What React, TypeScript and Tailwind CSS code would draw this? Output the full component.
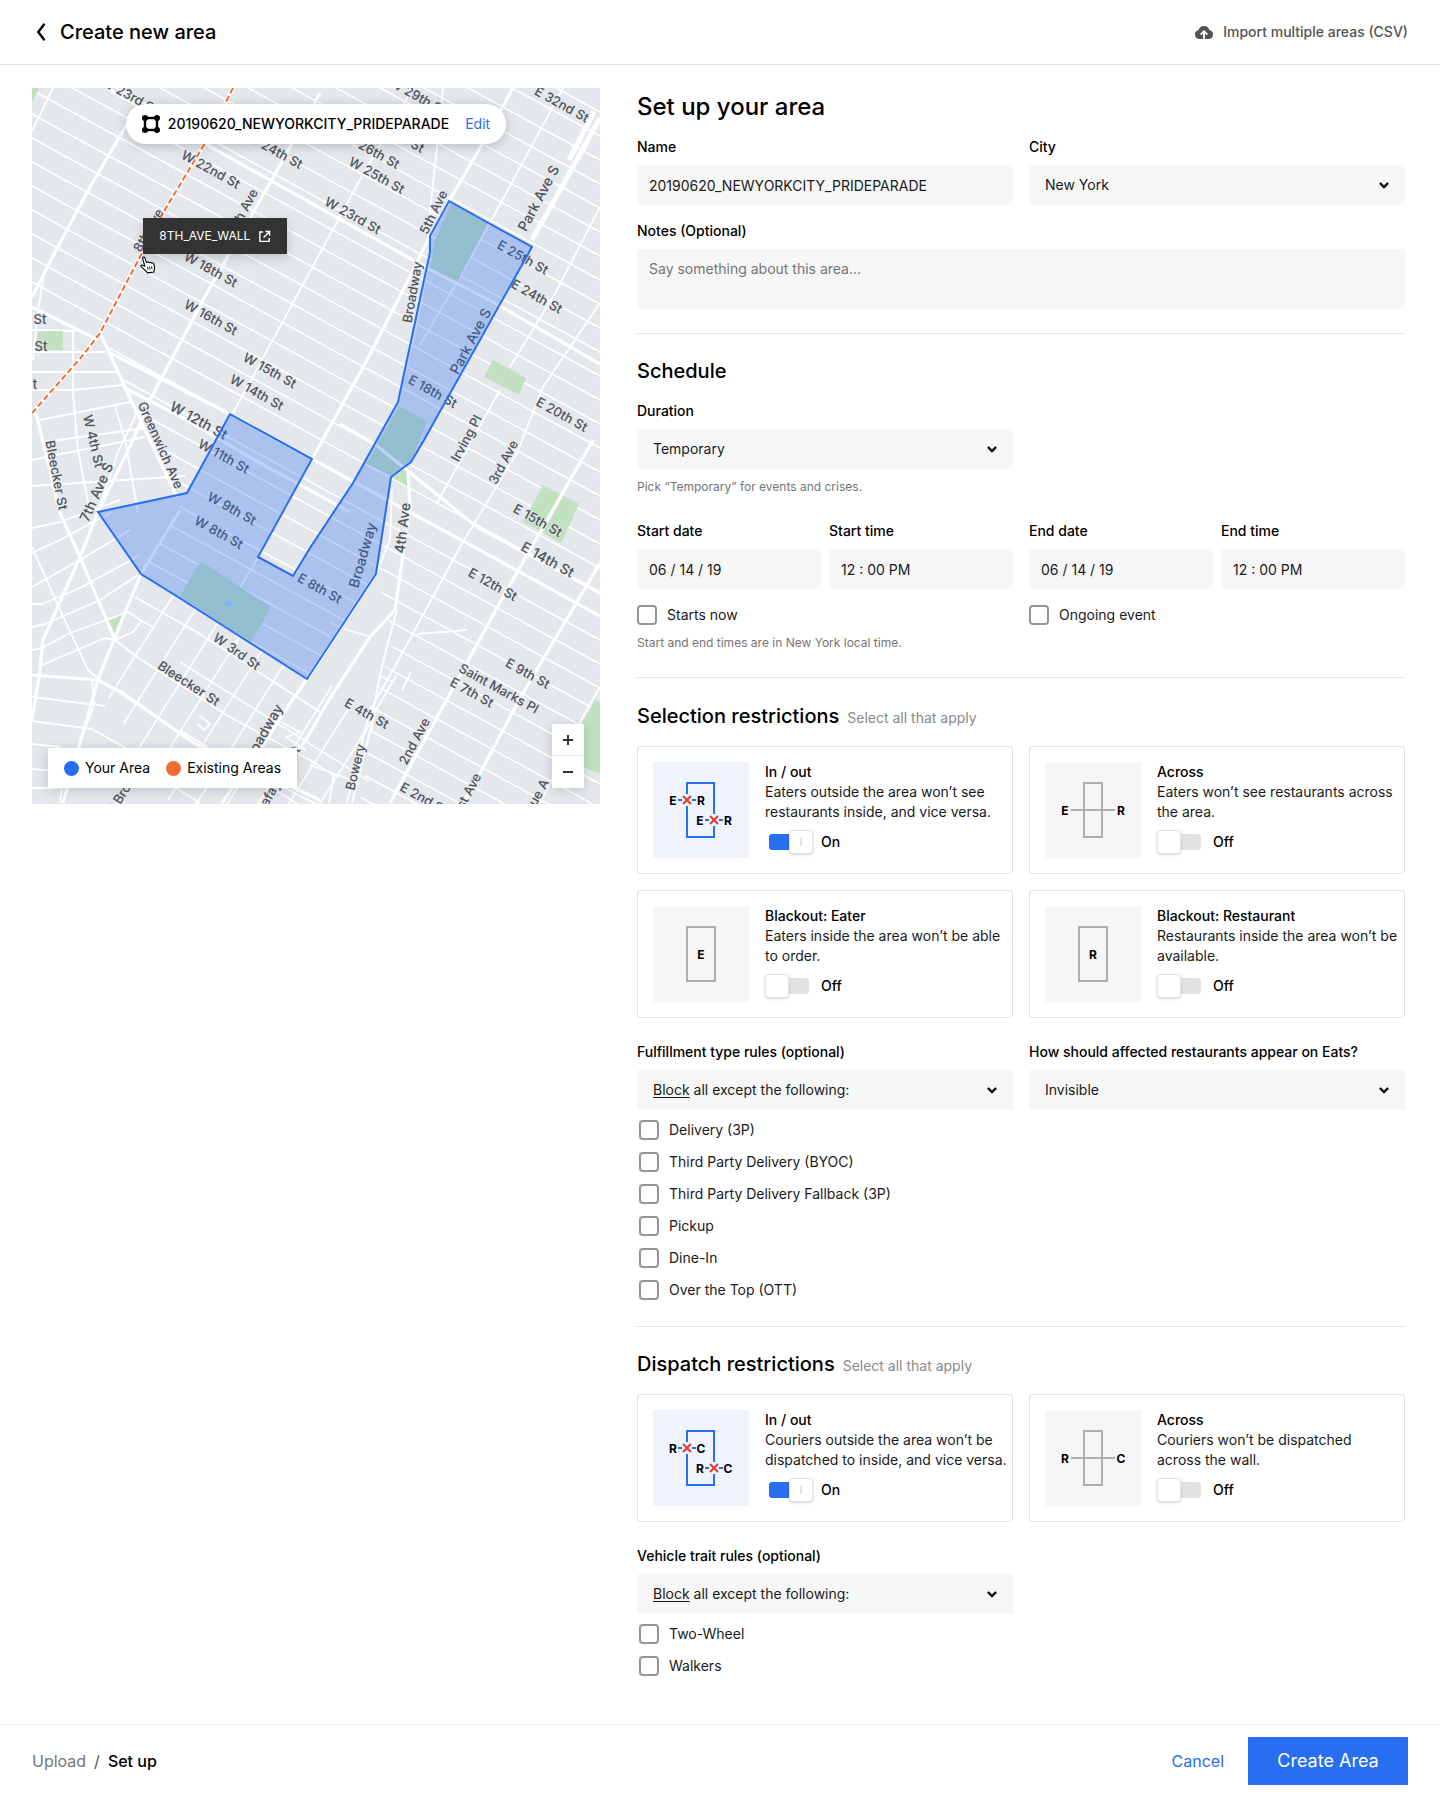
import React, { useId, useState } from "react";

/* ------------------------------------------------------------------ map */

type Pt = [number, number];

const path = (pts: Pt[]) => "M" + pts.map((p) => p.join(" ")).join("L");

const AREA: Pt[] = [
  [449, 201], [532, 247], [424, 440], [411, 462], [391, 477], [376, 574], [307, 679],
  [178, 597], [141, 574], [98, 512], [187, 493], [230, 414], [312, 459], [258, 557],
  [293, 576], [310, 548], [353, 483], [398, 402], [430, 252], [430, 236],
];

const WALL: Pt[] = [[233, 88], [205, 143], [163, 213], [100, 333], [84, 354], [32, 413]];

const PARKS: Pt[][] = [
  [[452, 203], [488, 223], [457, 282], [430, 269], [435, 240]],
  [[399, 406], [427, 421], [411, 461], [390, 475], [367, 464]],
  [[392, 477], [407, 468], [408, 487]],
  [[201, 561], [271, 607], [251, 642], [180, 596]],
  [[493, 360], [526, 378], [519, 395], [484, 377]],
  [[543, 485], [560, 494], [542, 532], [523, 522]],
  [[563, 496], [579, 504], [561, 543], [543, 533]],
  [[595, 700], [600, 702], [600, 774], [583, 767], [582, 723]],
  [[38, 331], [63, 331], [63, 350], [36, 350]],
  [[32, 88], [39, 88], [32, 102]],
  [[108, 621], [122, 615], [115, 633]],
];

/* Wide avenues and crosstown streets */
const MAJOR: Pt[][] = [
  [[143, 97], [90, 187], [52, 258], [32, 297]],
  [[320, 93], [270, 183], [203, 300], [150, 400], [133, 440], [98, 512], [80, 557], [43, 640], [40, 670], [32, 720]],
  [[180, 510], [141, 574], [115, 637], [98, 680], [63, 803]],
  [[513, 88], [483, 143], [449, 201], [428, 240], [398, 300], [367, 360], [317, 450]],
  [[395, 610], [370, 637], [330, 698], [310, 733], [266, 803]],
  [[376, 574], [307, 679], [260, 747], [222, 803]],
  [[408, 470], [410, 507], [395, 610]],
  [[593, 440], [503, 597], [430, 730], [390, 803]],
  [[600, 563], [523, 693], [464, 803]],
  [[100, 333], [137, 413], [177, 497]],
  [[32, 410], [37, 417], [45, 450], [60, 513], [80, 557], [115, 640]],
  [[110, 90], [207, 145], [320, 208], [427, 268], [493, 302], [600, 364]],
  [[110, 353], [230, 414], [312, 459], [378, 495], [476, 548], [600, 616]],
  [[340, 424], [376, 445], [477, 527], [600, 593]],
  [[123, 387], [187, 420], [258, 462], [350, 512]],
  [[32, 675], [98, 680], [120, 692], [200, 747], [260, 772], [320, 800]],
  [[32, 307], [94, 338]],
];

/* The paired roadway of Park Ave S */
const PARK_AVE: Pt[][] = [[[600, 118], [570, 172], [532, 240]], [[594, 112], [569, 160]]];

const MINOR: Pt[][] = [
  [[53, 88], [32, 131]],
  [[410, 93], [356, 187], [300, 290], [233, 413]],
  [[443, 88], [430, 213], [428, 240]],
  [[430, 252], [418, 320], [398, 402]],
  [[563, 88], [490, 223], [457, 282], [420, 345]],
  [[600, 207], [557, 290], [510, 367]],
  [[500, 390], [437, 503]],
  [[600, 303], [543, 387], [517, 453], [460, 547], [393, 670], [370, 710], [347, 803]],
  [[396, 676], [375, 712], [352, 803]],
  [[397, 610], [386, 650], [379, 680], [373, 712], [372, 730]],
  [[600, 687], [583, 717], [540, 803]],
  [[45, 270], [38, 310], [33, 360]],
  [[392, 490], [390, 540], [376, 574]],
  [[137, 413], [118, 452], [98, 512]],
  [[317, 450], [258, 557], [230, 605]],
  [[370, 637], [342, 628], [330, 622]],
  [[417, 634], [467, 630]],
  [[120, 690], [190, 740], [320, 806]],
  [[73, 330], [73, 393], [78, 450], [90, 512]],
  [[32, 330], [75, 331]],
  [[32, 352], [105, 352]],
  [[32, 372], [116, 372]],
  [[32, 390], [74, 390], [123, 385]],
  [[40, 420], [130, 402]],
  [[45, 442], [146, 428]],
  [[32, 460], [145, 437]],
  [[32, 486], [185, 476]],
  [[115, 406], [125, 440], [138, 512]],
  [[32, 528], [60, 522], [120, 500]],
  [[32, 553], [60, 540], [112, 512]],
  [[32, 587], [80, 560], [130, 530]],
  [[32, 604], [42, 604], [80, 588], [140, 555]],
  [[32, 627], [45, 624], [100, 600], [138, 575]],
  [[32, 650], [42, 648], [68, 634], [128, 612], [140, 620], [155, 628]],
  [[42, 665], [105, 638], [115, 640], [133, 632], [142, 620]],
  [[32, 547], [60, 610], [88, 670], [98, 678]],
  [[32, 697], [105, 706]],
  [[32, 721], [92, 729], [150, 762]],
  [[32, 744], [60, 747]],
  [[32, 769], [160, 778], [200, 803]],
  [[92, 680], [94, 706], [78, 747]],
  [[115, 640], [137, 657], [230, 717], [310, 760], [335, 776]],
  [[135, 597], [200, 634], [320, 712]],
  [[281, 722], [300, 732], [286, 737], [306, 750]],
  [[60, 803], [62, 788], [32, 788]],
  [[200, 716], [210, 724], [204, 730], [198, 724]],
  [[402, 690], [411, 672]],
  [[380, 676], [393, 682]],
  [[310, 765], [352, 780]],
  [[329, 803], [334, 775]],
];

const range = (n: number) => Array.from({ length: n }, (_, i) => i);

const LABELS: [string, number, number, number, number?][] = [
  ["W 23rd St", 130, 95, 29], ["W 22nd St", 211, 169, 29], ["W 24th St", 275, 150, 29],
  ["7th Ave", 243, 210, -62], ["8th Ave", 148, 230, -60], ["W 18th St", 211, 269, 29],
  ["W 16th St", 211, 317, 29], ["W 15th St", 270, 370, 29], ["W 14th St", 257, 392, 29],
  ["W 12th St", 199, 420, 29, 14], ["W 11th St", 224, 456, 29], ["W 9th St", 232, 508, 29],
  ["W 8th St", 219, 532, 29], ["E 8th St", 320, 588, 29], ["St", 40, 319, 0], ["St", 41, 346, 0],
  ["t", 35, 384, 0], ["Greenwich Ave", 161, 445, 66], ["W 4th St", 94, 441, 77],
  ["7th Ave S", 96, 492, -66, 14], ["Bleecker St", 57, 475, 79], ["W 3rd St", 237, 651, 35],
  ["Bleecker St", 189, 683, 33], ["Broadway", 262, 734, -60, 14], ["Lafayette St", 278, 779, -60],
  ["W Broadway", 128, 783, -58], ["W 25th St", 377, 175, 29], ["W 26th St", 372, 150, 29],
  ["W 27th St", 397, 134, 29], ["W 29th St", 418, 96, 29], ["W 23rd St", 353, 215, 29],
  ["5th Ave", 433, 212, -64], ["Broadway", 412, 292, -80], ["Park Ave S", 538, 198, -62, 14],
  ["E 32nd St", 562, 104, 29], ["E 25th St", 523, 257, 29], ["E 24th St", 537, 296, 29],
  ["Park Ave S", 470, 341, -62, 14], ["E 18th St", 433, 391, 29], ["E 20th St", 562, 414, 29],
  ["Irving Pl", 466, 438, -62], ["3rd Ave", 503, 462, -62], ["4th Ave", 402, 528, -83, 14],
  ["Broadway", 362, 555, -74, 14], ["E 15th St", 538, 520, 29], ["E 14th St", 548, 559, 29, 14],
  ["E 12th St", 493, 584, 29], ["E 9th St", 528, 673, 29], ["Saint Marks Pl", 499, 688, 29],
  ["E 7th St", 472, 692, 29], ["E 4th St", 367, 713, 29], ["2nd Ave", 414, 741, -62],
  ["Bowery", 355, 767, -76], ["E 2nd St", 424, 798, 29], ["1st Ave", 467, 793, -62],
  ["Avenue A", 531, 806, -62],
];

function StreetMap() {
  return (
    <svg viewBox="32 88 568 716" preserveAspectRatio="xMidYMid slice" className="block h-full w-full" role="img" aria-label="Map of the area">
      <defs>
        <clipPath id="uptown">
          <path d="M32 88H600V804H360L376 700L393 640L376 574L307 679L141 574L187 493L150 440L100 333L32 300Z" />
        </clipPath>
        <clipPath id="soho">
          <path d="M141 574L307 679L376 574L393 640L365 804H170L98 680L115 637Z" />
        </clipPath>
      </defs>
      <rect x="32" y="88" width="568" height="716" fill="#e4e7ec" />
      <g fill="none" stroke="#fff" strokeLinejoin="round">
        <g clipPath="url(#uptown)" strokeWidth="1.6">
          {range(45).map((i) => (
            <path key={i} d={`M32 ${-198 + i * 24}L600 ${112 + i * 24}`} />
          ))}
        </g>
        <g clipPath="url(#soho)" strokeWidth="1.6">
          {range(10).map((i) => (
            <path key={i} d={`M${178 + i * 22} ${588 + i * 14}L${80 + i * 22} ${744 + i * 14}`} />
          ))}
          {range(2).map((i) => (
            <path key={i} d={`M180 ${662 + i * 68}L380 ${788 + i * 68}`} />
          ))}
        </g>
        {MINOR.map((p, i) => (
          <path key={i} d={path(p)} strokeWidth="1.8" />
        ))}
      </g>
      {PARKS.map((p, i) => (
        <path key={i} d={path(p) + "Z"} fill="#c1e1c1" />
      ))}
      <g fill="none" stroke="#fff" strokeLinejoin="round">
        {MAJOR.map((p, i) => (
          <path key={i} d={path(p)} strokeWidth="3.2" />
        ))}
        {PARK_AVE.map((p, i) => (
          <path key={i} d={path(p)} strokeWidth="5" />
        ))}
        <path d={path(WALL)} strokeWidth="4" />
      </g>
      <g className="font-medium" fill="#4e5259" textAnchor="middle" dominantBaseline="central" stroke="#e4e7ec" strokeWidth="2" strokeOpacity="0.6" paintOrder="stroke">
        {LABELS.map(([text, x, y, angle, size], i) => (
          <text key={i} fontSize={size ?? 13} transform={`translate(${x} ${y}) rotate(${angle})`}>
            {text}
          </text>
        ))}
      </g>
      <path d={path(WALL)} fill="none" stroke="#ed6e33" strokeWidth="2" strokeDasharray="6 3" />
      <path d={path(AREA) + "Z"} fill="#276ef1" fillOpacity="0.3" stroke="#276ef1" strokeWidth="2" />
      <circle cx="228" cy="603" r="3" fill="#84b0f4" />
    </svg>
  );
}

function VertexIcon() {
  return (
    <svg width="18" height="18" viewBox="0 0 18 18" aria-hidden="true">
      <rect x="3" y="3" width="12" height="12" fill="none" stroke="#000" strokeWidth="2.4" />
      {[[3, 3], [15, 3], [3, 15], [15, 15]].map(([x, y]) => (
        <circle key={`${x}-${y}`} cx={x} cy={y} r="3" />
      ))}
    </svg>
  );
}

function HandCursor() {
  return (
    <svg className="absolute left-[19%] top-[23.5%]" width="16" height="18" viewBox="0 0 16 18" aria-hidden="true">
      <path
        d="M2.600 2.400C2.300 1 4.300 0.500 4.900 1.900L6.600 6.600C7.100 5.700 8.700 5.700 9 6.700C9.700 5.900 11.100 6.100 11.400 7.100C12.200 6.500 13.500 6.900 13.800 8L14.600 11.200C14.800 12.800 14.100 13.600 14 14.600V16L7.300 16.900L6.600 15.600C5.300 14.700 4.200 13.200 2.600 11.900L1.200 10.900C0.300 10 1.200 8.800 2.600 9.200L4.900 10.300Z"
        fill="#fff"
        stroke="#000"
        strokeWidth="1.100"
        strokeLinejoin="round"
      />
      <path d="M7.500 10.800L8.100 13.800M9.600 10.500L10.100 13.500M11.600 10.300L12 13.100" stroke="#000" strokeWidth="0.900" fill="none" />
    </svg>
  );
}

function MapPanel() {
  return (
    <section aria-label="Map" className="relative aspect-[568/716] overflow-hidden">
      <StreetMap />
      <div className="absolute inset-x-0 top-4 flex justify-center">
        <div className="flex h-10 items-center rounded-full bg-white px-4 text-sm font-medium whitespace-nowrap shadow-[0_2px_12px_rgba(0,0,0,0.2)]">
          <VertexIcon />
          <span className="ml-2">20190620_NEWYORKCITY_PRIDEPARADE</span>
          <button type="button" className="ml-4 font-normal text-[#276ef1]">Edit</button>
        </div>
      </div>
      <a href="#wall" className="absolute left-[19.6%] top-[18.2%] flex h-9 items-center gap-2 bg-[#333] px-4 text-xs text-white shadow-[0_4px_12px_rgba(0,0,0,0.16)]">
        8TH_AVE_WALL
        <svg width="13" height="13" viewBox="0 0 14 14" fill="none" stroke="currentColor" strokeWidth="1.500" aria-hidden="true">
          <path d="M5.500 2.200H2V12.200H12V8.500M8 1.600H12.500V6.100M12.300 1.800L6 8.100" />
        </svg>
      </a>
      <HandCursor />
      <ul className="absolute bottom-4 left-4 flex h-10 items-center gap-4 bg-white px-4 text-sm shadow-[0_2px_12px_rgba(0,0,0,0.16)]">
        <li className="flex items-center gap-1.5"><span className="size-[15px] rounded-full bg-[#276ef1]" />Your Area</li>
        <li className="flex items-center gap-1.5"><span className="size-[15px] rounded-full bg-[#ed6e33]" />Existing Areas</li>
      </ul>
      <div className="absolute right-4 bottom-4 flex w-8 flex-col divide-y divide-[#e2e2e2] bg-white shadow-[0_2px_12px_rgba(0,0,0,0.16)]">
        {[["Zoom in", "M11 16H21M16 11V21"], ["Zoom out", "M11 16H21"]].map(([name, d]) => (
          <button key={name} type="button" aria-label={name} className="h-8">
            <svg viewBox="0 0 32 32" className="size-8" stroke="#333" strokeWidth="2" aria-hidden="true"><path d={d} /></svg>
          </button>
        ))}
      </div>
    </section>
  );
}

/* --------------------------------------------------------- form controls */

const labelClass = "text-sm leading-5 font-medium";
const fieldClass = "h-10 w-full rounded-[3px] bg-[#f6f6f6] text-sm";

function TextField({ label, value }: { label: string; value: string }) {
  const id = useId();
  return (
    <div className="flex min-w-0 flex-col gap-2">
      <label htmlFor={id} className={labelClass}>{label}</label>
      <input id={id} defaultValue={value} className={`${fieldClass} px-3 text-[#1a1a1a]`} />
    </div>
  );
}

function SelectField({ label, value, display }: { label: string; value: string; display?: React.ReactNode }) {
  const id = useId();
  return (
    <div className="flex min-w-0 flex-col gap-2">
      <label htmlFor={id} className={labelClass}>{label}</label>
      <div className="grid items-center *:col-start-1 *:row-start-1">
        <select id={id} className={`${fieldClass} appearance-none px-4 ${display ? "text-transparent" : "text-[#1a1a1a]"}`}>
          <option>{value}</option>
        </select>
        {display && <span aria-hidden="true" className="pointer-events-none px-4 text-sm text-[#1a1a1a]">{display}</span>}
        <svg className="pointer-events-none mr-4 justify-self-end" width="10" height="7" viewBox="0 0 10 7" fill="none" stroke="#000" strokeWidth="2.400" aria-hidden="true">
          <path d="M0.900 1L5 5L9.100 1" />
        </svg>
      </div>
    </div>
  );
}

function Check({ label }: { label: string }) {
  return (
    <label className="flex items-center gap-2.5 text-sm leading-5 text-[#1a1a1a]">
      <input type="checkbox" className="size-5 shrink-0 appearance-none rounded-[4px] border-2 border-[#949494] bg-white checked:bg-[#276ef1]" />
      {label}
    </label>
  );
}

const blockRule = (
  <>
    <span className="underline underline-offset-2">Block</span> all except the following:
  </>
);

/* ------------------------------------------------------ restriction cards */

type Kind = "inout" | "across" | "blackout";

function Glyph({ x, y, children }: { x: number; y: number; children: string }) {
  return (
    <text x={x} y={y} fontSize="12" className="font-bold" textAnchor="middle" dominantBaseline="central">
      {children}
    </text>
  );
}

function Diagram({ kind, from, to }: { kind: Kind; from: string; to: string }) {
  const on = kind === "inout";
  return (
    <svg viewBox="0 0 96 96" className="size-24 shrink-0 rounded-xs" aria-hidden="true">
      <rect width="96" height="96" fill={on ? "#eef3fe" : "#f6f6f6"} />
      {kind === "inout" && (
        <>
          <path d="M34 32V21H61V52M34 44V75H61V64" fill="none" stroke="#276ef1" strokeWidth="2" />
          {[[34, 38], [61, 58]].map(([x, y]) => (
            <g key={x}>
              <path d={`M${x - 9} ${y}h4M${x + 5} ${y}h4`} stroke="#276ef1" strokeWidth="2" />
              <path d={`M${x - 4} ${y - 4}l8 8M${x + 4} ${y - 4}l-8 8`} stroke="#e2372b" strokeWidth="2" />
              <Glyph x={x - 14} y={y}>{from}</Glyph>
              <Glyph x={x + 14} y={y}>{to}</Glyph>
            </g>
          ))}
        </>
      )}
      {kind === "across" && (
        <>
          <path d="M39 21H57V75H39ZM26 48H70" fill="none" stroke="#afafaf" strokeWidth="2" />
          <Glyph x={20} y={48}>{from}</Glyph>
          <Glyph x={76} y={48}>{to}</Glyph>
        </>
      )}
      {kind === "blackout" && (
        <>
          <rect x="34" y="21" width="28" height="54" fill="none" stroke="#afafaf" strokeWidth="2" />
          <Glyph x={48} y={48}>{from}</Glyph>
        </>
      )}
    </svg>
  );
}

function Toggle({ name, initial }: { name: string; initial: boolean }) {
  const [on, setOn] = useState(initial);
  return (
    <label className="mt-2 flex h-6 items-center text-sm font-medium">
      <span className="grid w-12 items-center *:col-start-1 *:row-start-1">
        <input
          type="checkbox"
          role="switch"
          aria-label={name}
          checked={on}
          onChange={() => setOn(!on)}
          className="h-4 w-10 appearance-none justify-self-center rounded-[3px] bg-[#e2e2e2] checked:bg-[#276ef1]"
        />
        <span className={`pointer-events-none flex size-6 items-center justify-center rounded-[4px] border border-[#e2e2e2] bg-white shadow-[0_1px_3px_rgba(0,0,0,0.16)] ${on ? "justify-self-end" : ""}`}>
          {on && <span className="h-2 w-0.5 bg-[#e2e2e2]" />}
        </span>
      </span>
      <span className="ml-2">{on ? "On" : "Off"}</span>
    </label>
  );
}

type CardProps = { kind: Kind; from: string; to?: string; title: string; text: string };

function Card({ kind, from, to = "", title, text }: CardProps) {
  return (
    <article className="flex min-w-0 gap-4 rounded-[3px] border border-[#e2e2e2] py-[15px] pr-0.5 pl-[15px]">
      <Diagram kind={kind} from={from} to={to} />
      <div className="min-w-0 text-sm leading-5">
        <h3 className="font-medium">{title}</h3>
        <p className="whitespace-pre-line text-[#1a1a1a]">{text}</p>
        <Toggle name={title} initial={kind === "inout"} />
      </div>
    </article>
  );
}

function SectionTitle({ children, note }: { children: string; note?: string }) {
  return (
    <div className="mb-4 flex items-baseline gap-2">
      <h2 className="text-xl leading-7 font-medium">{children}</h2>
      {note && <span className="text-sm leading-5 text-[#8a8a8a]">{note}</span>}
    </div>
  );
}

/* ------------------------------------------------------------------ page */

export default function App() {
  return (
    <div className="flex min-h-screen flex-col bg-white font-['Inter',sans-serif] text-black">
      <header className="flex h-[65px] items-center justify-between border-b border-[#e2e2e2] px-8">
        <div className="flex items-center gap-3.5">
          <button type="button" aria-label="Back" className="pl-1">
            <svg width="10" height="18" viewBox="0 0 10 18" fill="none" stroke="#000" strokeWidth="2.400" aria-hidden="true">
              <path d="M8.500 0.800L2.300 9L8.500 17.200" />
            </svg>
          </button>
          <h1 className="text-xl leading-7 font-medium">Create new area</h1>
        </div>
        <button type="button" className="flex items-center gap-2.5 text-sm font-medium text-[#545454]">
          <svg width="18" height="14" viewBox="0 0 18 14" aria-hidden="true">
            <path d="M4.500 14A4.500 4.500 0 0 1 3.600 5.100 5.600 5.600 0 0 1 14.400 5.100 4.500 4.500 0 0 1 13.500 14Z" fill="#545454" />
            <path d="M9 14V6.500M5.700 9.500L9 6.200L12.300 9.500" fill="none" stroke="#fff" strokeWidth="1.800" />
          </svg>
          Import multiple areas (CSV)
        </button>
      </header>

      <main className="grid flex-1 grid-cols-[568fr_768fr] items-start gap-[37px] pt-[23px] pr-[35px] pb-12 pl-8">
        <MapPanel />

        <form className="min-w-0 pt-[3px]" onSubmit={(e) => e.preventDefault()}>
          <section className="flex flex-col pb-6">
            <h2 className="mb-3.5 text-2xl leading-8 font-medium">Set up your area</h2>
            <div className="grid grid-cols-2 gap-4">
              <TextField label="Name" value="20190620_NEWYORKCITY_PRIDEPARADE" />
              <SelectField label="City" value="New York" />
            </div>
            <label htmlFor="notes" className={`${labelClass} mt-4 mb-2`}>Notes (Optional)</label>
            <textarea
              id="notes"
              placeholder="Say something about this area..."
              className="block h-[60px] w-full resize-none rounded-[3px] bg-[#f6f6f6] px-3 py-2.5 text-sm placeholder:text-[#757575]"
            />
          </section>

          <section className="border-t border-[#e2e2e2] pt-[23px] pb-6">
            <SectionTitle>Schedule</SectionTitle>
            <div className="grid grid-cols-2 gap-4">
              <SelectField label="Duration" value="Temporary" />
            </div>
            <p className="mt-2 text-xs leading-5 text-[#757575]">Pick “Temporary” for events and crises.</p>
            <div className="mt-6 grid grid-cols-2 gap-4">
              <div className="grid grid-cols-2 gap-2">
                <TextField label="Start date" value="06 / 14 / 19" />
                <TextField label="Start time" value="12 : 00 PM" />
              </div>
              <div className="grid grid-cols-2 gap-2">
                <TextField label="End date" value="06 / 14 / 19" />
                <TextField label="End time" value="12 : 00 PM" />
              </div>
              <Check label="Starts now" />
              <Check label="Ongoing event" />
            </div>
            <p className="mt-2 text-xs leading-5 text-[#757575]">Start and end times are in New York local time.</p>
          </section>

          <section className="border-t border-[#e2e2e2] pt-6 pb-[26px]">
            <SectionTitle note="Select all that apply">Selection restrictions</SectionTitle>
            <div className="grid grid-cols-2 gap-4">
              <Card kind="inout" from="E" to="R" title="In / out" text={"Eaters outside the area won’t see\nrestaurants inside, and vice versa."} />
              <Card kind="across" from="E" to="R" title="Across" text={"Eaters won’t see restaurants across\nthe area."} />
              <Card kind="blackout" from="E" title="Blackout: Eater" text={"Eaters inside the area won’t be able\nto order."} />
              <Card kind="blackout" from="R" title="Blackout: Restaurant" text={"Restaurants inside the area won’t be\navailable."} />
            </div>
            <div className="mt-6 grid grid-cols-2 gap-4">
              <div>
                <SelectField label="Fulfillment type rules (optional)" value="Block all except the following:" display={blockRule} />
                <div className="mt-2.5 flex flex-col gap-3 pl-0.5">
                  {["Delivery (3P)", "Third Party Delivery (BYOC)", "Third Party Delivery Fallback (3P)", "Pickup", "Dine-In", "Over the Top (OTT)"].map((t) => (
                    <Check key={t} label={t} />
                  ))}
                </div>
              </div>
              <SelectField label="How should affected restaurants appear on Eats?" value="Invisible" />
            </div>
          </section>

          <section className="border-t border-[#e2e2e2] pt-[23px]">
            <SectionTitle note="Select all that apply">Dispatch restrictions</SectionTitle>
            <div className="grid grid-cols-2 gap-4">
              <Card kind="inout" from="R" to="C" title="In / out" text={"Couriers outside the area won’t be\ndispatched to inside, and vice versa."} />
              <Card kind="across" from="R" to="C" title="Across" text={"Couriers won’t be dispatched\nacross the wall."} />
            </div>
            <div className="mt-6 grid grid-cols-2 gap-4">
              <div>
                <SelectField label="Vehicle trait rules (optional)" value="Block all except the following:" display={blockRule} />
                <div className="mt-2.5 flex flex-col gap-3 pl-0.5">
                  <Check label="Two-Wheel" />
                  <Check label="Walkers" />
                </div>
              </div>
            </div>
          </section>
        </form>
      </main>

      <footer className="flex h-[72px] items-center justify-between border-t border-[#eee] px-8">
        <nav aria-label="Steps" className="flex gap-2 text-base">
          <a href="#upload" className="text-[#757575]">Upload</a>
          <span className="text-[#545454]">/</span>
          <span className="font-medium" aria-current="step">Set up</span>
        </nav>
        <div className="flex items-center gap-6">
          <button type="button" className="text-base text-[#276ef1]">Cancel</button>
          <button type="submit" className="h-12 w-40 bg-[#276ef1] text-lg text-white">Create Area</button>
        </div>
      </footer>
    </div>
  );
}
